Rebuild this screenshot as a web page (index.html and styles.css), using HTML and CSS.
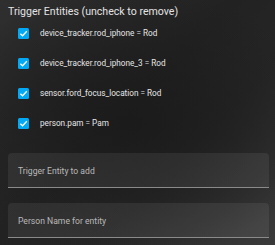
FILE: index.html
```html
<!DOCTYPE html>
<html>
<head>
<meta charset="utf-8">
<link rel="stylesheet" href="styles.css">
</head>
<body>
<div class="panel">
  <div class="title">Trigger Entities (uncheck to remove)</div>
  <ul class="entities">
    <li class="row"><span class="cb"><svg viewBox="0 0 12 12" width="11" height="11"><path d="M2.6 6.2 L5 8.5 L9.6 3.6" fill="none" stroke="#fff" stroke-width="1.4"/></svg></span><span class="lbl">device_tracker.rod_iphone = Rod</span></li>
    <li class="row"><span class="cb"><svg viewBox="0 0 12 12" width="11" height="11"><path d="M2.6 6.2 L5 8.5 L9.6 3.6" fill="none" stroke="#fff" stroke-width="1.4"/></svg></span><span class="lbl">device_tracker.rod_iphone_3 = Rod</span></li>
    <li class="row"><span class="cb"><svg viewBox="0 0 12 12" width="11" height="11"><path d="M2.6 6.2 L5 8.5 L9.6 3.6" fill="none" stroke="#fff" stroke-width="1.4"/></svg></span><span class="lbl">sensor.ford_focus_location = Rod</span></li>
    <li class="row"><span class="cb"><svg viewBox="0 0 12 12" width="11" height="11"><path d="M2.6 6.2 L5 8.5 L9.6 3.6" fill="none" stroke="#fff" stroke-width="1.4"/></svg></span><span class="lbl">person.pam = Pam</span></li>
  </ul>
  <div class="fields">
    <div class="field"><span class="flabel">Trigger Entity to add</span></div>
    <div class="field"><span class="flabel">Person Name for entity</span></div>
  </div>
</div>
</body>
</html>
```
FILE: styles.css
```css
html, body {
  margin: 0;
  padding: 0;
  height: 100%;
}
body {
  background:
    radial-gradient(ellipse 70% 55% at 48% 50%, #1b1b1b 0%, rgba(27,27,27,0) 100%),
    linear-gradient(135deg, #2f2f2f 0%, #222 45%, #262626 65%, #3a3a3a 100%);
  font-family: Roboto, "Noto Sans", sans-serif;
  color: #e1e1e1;
  overflow: hidden;
}
.panel {
  padding: 6px 6px 0 8px;
  display: flex;
  flex-direction: column;
}
.title {
  font-size: 10.6px;
  line-height: 12px;
  color: #e3e3e3;
}
.entities {
  list-style: none;
  margin: 0;
  padding: 0;
  display: flex;
  flex-direction: column;
}
.row {
  height: 30px;
  display: flex;
  align-items: center;
  padding-left: 10px;
  gap: 11px;
}
.cb {
  width: 11px;
  height: 11px;
  background: #03a9f4;
  border-radius: 1.5px;
  display: flex;
  align-items: center;
  justify-content: center;
  flex: none;
}
.cb svg { display: block; }
.lbl {
  font-size: 8.2px;
  color: #e6e6e6;
}
.fields {
  margin-top: 15px;
  display: flex;
  flex-direction: column;
  gap: 15px;
}
.field {
  height: 33px;
  background: rgba(255,255,255,0.07);
  border-bottom: 1px solid #8a8a8a;
  border-radius: 4px 4px 0 0;
  display: flex;
  align-items: center;
  padding: 1px 10px 0 10px;
  box-sizing: content-box;
}
.flabel {
  font-size: 8.6px;
  color: #b9b9b9;
}
```
